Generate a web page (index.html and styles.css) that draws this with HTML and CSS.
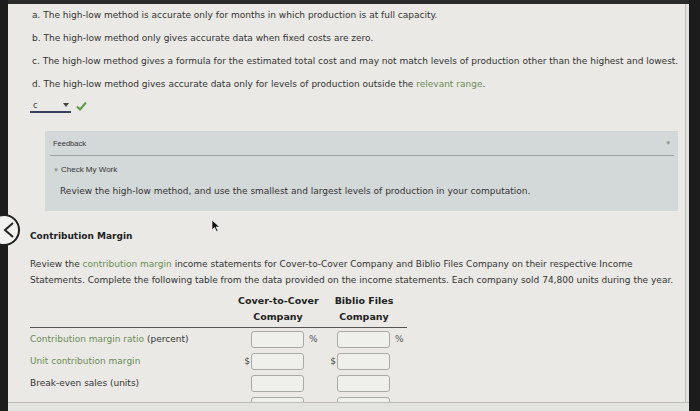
FILE: index.html
```html
<!DOCTYPE html>
<html lang="en">
<head>
    <meta charset="UTF-8">
    <title>Contribution Margin</title>
    <link rel="stylesheet" href="styles.css">
</head>
<body>
    <div class="screen">
        <div class="page">
            <div class="choices">
                <p>a. The high-low method is accurate only for months in which production is at full capacity.</p>
                <p>b. The high-low method only gives accurate data when fixed costs are zero.</p>
                <p>c. The high-low method gives a formula for the estimated total cost and may not match levels of production other than the highest and lowest.</p>
                <p>d. The high-low method gives accurate data only for levels of production outside the <a href="#">relevant range</a>.</p>
            </div>

            <div class="answer">
                <span class="select">c<span class="caret"></span></span>
                <svg class="check" width="11" height="10" viewBox="0 0 11 10">
                    <polyline points="1,5.5 4,8.5 10,1.5" fill="none" stroke="#5a9c47" stroke-width="2"/>
                </svg>
            </div>

            <div class="feedback">
                <div class="feedback-head">
                    <span>Feedback</span>
                    <span class="tri">&#9660;</span>
                </div>
                <div class="feedback-body">
                    <div class="check-work"><span class="tri">&#9660;</span>Check My Work</div>
                    <p>Review the high-low method, and use the smallest and largest levels of production in your computation.</p>
                </div>
            </div>

            <section class="cm">
                <h3>Contribution Margin</h3>
                <p class="intro">Review the <a href="#">contribution margin</a> income statements for Cover-to-Cover Company and Biblio Files Company on their respective Income Statements. Complete the following table from the data provided on the income statements. Each company sold 74,800 units during the year.</p>

                <div class="cm-table">
                    <div class="th-row">
                        <div></div>
                        <div class="th">Cover-to-Cover<br>Company</div>
                        <div class="th">Biblio Files<br>Company</div>
                    </div>
                    <div class="tr">
                        <div class="label"><a href="#">Contribution margin ratio</a> (percent)</div>
                        <div class="cell"><span class="pre"></span><input type="text"><span class="suf">%</span></div>
                        <div class="cell"><span class="pre"></span><input type="text"><span class="suf">%</span></div>
                    </div>
                    <div class="tr">
                        <div class="label"><a href="#">Unit contribution margin</a></div>
                        <div class="cell"><span class="pre">$</span><input type="text"><span class="suf"></span></div>
                        <div class="cell"><span class="pre">$</span><input type="text"><span class="suf"></span></div>
                    </div>
                    <div class="tr">
                        <div class="label">Break-even sales (units)</div>
                        <div class="cell"><span class="pre"></span><input type="text"><span class="suf"></span></div>
                        <div class="cell"><span class="pre"></span><input type="text"><span class="suf"></span></div>
                    </div>
                    <div class="tr">
                        <div class="label"></div>
                        <div class="cell"><span class="pre"></span><input type="text"><span class="suf"></span></div>
                        <div class="cell"><span class="pre"></span><input type="text"><span class="suf"></span></div>
                    </div>
                </div>
            </section>
        </div>
        <div class="scroll"></div>
        <div class="bottom-bar"></div>
    </div>

    <div class="back">
        <svg width="14" height="18" viewBox="0 0 14 18">
            <polyline points="11,2 3,9 11,16" fill="none" stroke="#222" stroke-width="2"/>
        </svg>
    </div>

    <svg class="pointer" width="9" height="13" viewBox="0 0 9 13">
        <path d="M1 1 L1 11 L3.5 8.5 L5.5 12.5 L7 11.8 L5 8 L8.5 8 Z" fill="#111" stroke="#fff" stroke-width="0.6"/>
    </svg>
</body>
</html>
```

FILE: styles.css
```css
* {
    margin: 0;
    padding: 0;
    box-sizing: border-box;
}

body {
    background: #1c1c1c;
    height: 411px;
    overflow: hidden;
    font-family: "DejaVu Sans", Verdana, sans-serif;
    font-size: 9px;
    color: #333;
    position: relative;
}

a {
    color: #6b8c57;
    text-decoration: none;
}

.screen {
    margin-left: 8px;
    width: 681px;
    height: 411px;
    display: flex;
    background: #eae9e5;
    border-top: 4px solid #2a2a2a;
    position: relative;
    overflow: hidden;
}

.page {
    flex: 1;
    padding: 0 7px 0 22px;
}

.scroll {
    width: 7px;
    background: #e1e1de;
    border-left: 1px solid #bcbcb9;
}

/* answer choices */
.choices {
    padding-left: 2px;
}

.choices p {
    line-height: 23px;
    white-space: nowrap;
}

.answer {
    display: flex;
    align-items: center;
    gap: 5px;
    margin-top: 2px;
    height: 16px;
}

.select {
    display: inline-flex;
    align-items: center;
    justify-content: space-between;
    width: 41px;
    height: 13px;
    padding: 0 2px 0 3px;
    border-bottom: 2px solid #35435e;
    color: #2f3a55;
    font-size: 8px;
}

.caret {
    width: 0;
    height: 0;
    border-left: 3px solid transparent;
    border-right: 3px solid transparent;
    border-top: 4px solid #444;
}

/* feedback */
.feedback {
    margin: 17px 0 0 15px;
    background: #d3d8d9;
    height: 80px;
    font-family: "Liberation Sans", Arial, sans-serif;
}

.feedback-head {
    display: flex;
    justify-content: space-between;
    align-items: center;
    height: 25px;
    margin: 0 4px 0 5px;
    padding: 0 3px;
    border-bottom: 1px solid #9aa2a4;
    font-size: 7.5px;
    color: #333;
}

.feedback-head .tri {
    font-size: 6px;
    color: #8a8f90;
}

.feedback-body {
    padding: 9px 0 0 8px;
}

.check-work {
    font-size: 8px;
    color: #333;
}

.check-work .tri {
    font-size: 6px;
    color: #8a8f90;
    margin-right: 2px;
}

.feedback-body p {
    margin-top: 12px;
    padding-left: 7px;
    font-family: "DejaVu Sans", Verdana, sans-serif;
    font-size: 9px;
}

/* contribution margin */
.cm h3 {
    margin-top: 20px;
    font-size: 9px;
    font-weight: bold;
    color: #222;
}

.intro {
    margin-top: 15px;
    width: 645px;
    line-height: 16px;
}

.cm-table {
    margin-top: 5px;
}

.th-row,
.tr {
    display: grid;
    grid-template-columns: 202px 80px 80px;
    column-gap: 6px;
}

.th-row {
    width: 377px;
    border-bottom: 1px solid #555;
    padding-bottom: 2px;
}

.th {
    text-align: center;
    font-weight: bold;
    font-size: 9.5px;
    line-height: 16px;
    white-space: nowrap;
    color: #222;
}

.tr {
    height: 22px;
    align-items: center;
}

.label {
    color: #333;
}

.cell {
    display: flex;
    align-items: center;
}

.pre {
    width: 13px;
    text-align: right;
    padding-right: 1px;
    color: #444;
}

.suf {
    width: 14px;
    padding-left: 5px;
    color: #555;
}

.cell input {
    width: 53px;
    height: 17px;
    border: 1px solid #a9a9a7;
    border-radius: 3px;
    background: #efefec;
}

.bottom-bar {
    position: absolute;
    left: 0;
    right: 0;
    bottom: 0;
    height: 9px;
    background: #e3e3e0;
    border-top: 1px solid #bdbdba;
}

/* overlays */
.back {
    position: absolute;
    left: -12px;
    top: 214px;
    width: 32px;
    height: 32px;
    border-radius: 50%;
    border: 2px solid #1e1e1e;
    background: #f2f2f0;
    display: flex;
    align-items: center;
    justify-content: flex-end;
    padding-right: 2px;
}

.pointer {
    position: absolute;
    left: 211px;
    top: 219px;
}
```
